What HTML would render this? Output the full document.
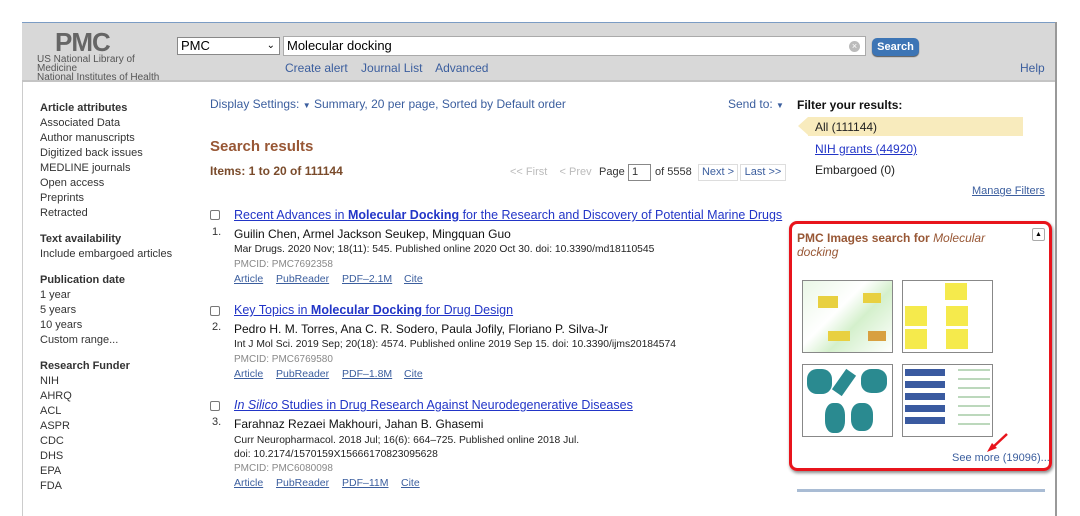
<!DOCTYPE html>
<html><head><style>
*{margin:0;padding:0;box-sizing:border-box}
body{width:1080px;height:516px;background:#fff;font-family:"Liberation Sans",Arial,sans-serif;position:relative;overflow:hidden;font-size:11px;color:#333}
.a{position:absolute;white-space:nowrap}
a,.l{color:#3b5e9e}
.u{text-decoration:underline}
#hdr{position:absolute;left:22px;top:22px;width:1034px;height:60px;background:#d8d8d8;border-top:1px solid #7b9cc4;border-bottom:2px solid #c4c4c4}
#vr{position:absolute;left:1055px;top:22px;width:2px;height:494px;background:#999}
#vl{position:absolute;left:22px;top:82px;width:1px;height:434px;background:#ccc}
.side div{font-size:11px;color:#333;line-height:15px}
.side b{color:#333}
.res .t{font-size:12.5px;color:#2235c7;text-decoration:underline}
.cb{position:absolute;width:10px;height:10px;border:1px solid #777;border-radius:2px;background:#fff}
.thumb{position:absolute;border:1px solid #888;width:91px;height:73px;background:#fff}
.det{font-size:10.3px !important}
</style></head><body>
<div id="hdr"></div>
<div id="vr"></div>
<div id="vl"></div>
<div class="a" style="left:55px;top:27px;font-size:26px;font-weight:bold;color:#666;letter-spacing:-1px;">PMC</div>
<div class="a" style="left:37px;top:55px;font-size:10px;color:#555;line-height:9px">US National Library of<br>Medicine<br>National Institutes of Health</div>
<div class="a" style="left:177px;top:37px;width:103px;height:18px;background:#fff;border:1px solid #888;font-size:13px;padding-left:3px;line-height:16px;color:#000">PMC<span style="position:absolute;right:4px;top:0;font-size:10px">&#x2304;</span></div>
<div class="a" style="left:283px;top:36px;width:583px;height:20px;background:#fff;border:1px solid #aaa;font-size:13px;padding-left:3px;line-height:18px;color:#000">Molecular docking<span style="position:absolute;right:5px;top:4px;width:11px;height:11px;border-radius:50%;background:#bbb;color:#fff;font-size:9px;line-height:11px;text-align:center">×</span></div>
<div class="a" style="left:872px;top:38px;width:47px;height:18px;background:#3d75b5;border-radius:5px;color:#fff;font-weight:bold;font-size:11px;text-align:center;line-height:18px;box-shadow:0 1px 1px #555">Search</div>
<div class="a l" style="left:285px;top:61px;font-size:12px">Create alert&nbsp;&nbsp;&nbsp; Journal List&nbsp;&nbsp;&nbsp; Advanced</div>
<div class="a l" style="left:1020px;top:61px;font-size:12px">Help</div>
<div class="a side" style="left:40px;top:101px">
<div><b>Article attributes</b></div><div>Associated Data</div><div>Author manuscripts</div><div>Digitized back issues</div><div>MEDLINE journals</div><div>Open access</div><div>Preprints</div><div>Retracted</div>
<div style="margin-top:11px"><b>Text availability</b></div><div>Include embargoed articles</div>
<div style="margin-top:11px"><b>Publication date</b></div><div>1 year</div><div>5 years</div><div>10 years</div><div>Custom range...</div>
<div style="margin-top:11px"><b>Research Funder</b></div><div>NIH</div><div>AHRQ</div><div>ACL</div><div>ASPR</div><div>CDC</div><div>DHS</div><div>EPA</div><div>FDA</div>
</div>
<div class="a l" style="left:210px;top:97px;font-size:12px">Display Settings: <span style="font-size:8px">▼</span> Summary, 20 per page, Sorted by Default order</div>
<div class="a l" style="left:728px;top:97px;font-size:12px">Send to: <span style="font-size:8px">▼</span></div>
<div class="a" style="left:210px;top:138px;font-size:15px;font-weight:bold;color:#985735">Search results</div>
<div class="a" style="left:210px;top:164px;font-size:12px;font-weight:bold;color:#7a4b2b">Items: 1 to 20 of 111144</div>
<div class="a" style="left:510px;top:166px;font-size:11px;color:#bbb">&lt;&lt; First&nbsp;&nbsp;&nbsp; &lt; Prev</div>
<div class="a" style="left:599px;top:166px;font-size:11px;color:#333">Page</div>
<div class="a" style="left:628px;top:164px;width:23px;height:17px;border:1px solid #888;font-size:11px;padding-left:3px;line-height:15px">1</div>
<div class="a" style="left:655px;top:166px;font-size:11px">of 5558</div>
<div class="a l" style="left:698px;top:164px;width:40px;height:17px;border:1px solid #ddd;font-size:11px;text-align:center;line-height:15px">Next &gt;</div>
<div class="a l" style="left:740px;top:164px;width:46px;height:17px;border:1px solid #ddd;font-size:11px;text-align:center;line-height:15px">Last &gt;&gt;</div>

<div class="res">
<div class="cb" style="left:210px;top:210px"></div>
<div class="a t" style="left:234px;top:208px">Recent Advances in <b>Molecular Docking</b> for the Research and Discovery of Potential Marine Drugs</div>
<div class="a" style="left:212px;top:226px;font-size:11px">1.</div>
<div class="a" style="left:234px;top:227px;font-size:12px;color:#111">Guilin Chen, Armel Jackson Seukep, Mingquan Guo</div>
<div class="a det" style="left:234px;top:244px;color:#222">Mar Drugs. 2020 Nov; 18(11): 545. Published online 2020 Oct 30. doi: 10.3390/md18110545</div>
<div class="a" style="left:234px;top:259px;font-size:10px;color:#888">PMCID: PMC7692358</div>
<div class="a l u" style="left:234px;top:273px;font-size:10.5px">Article</div><div class="a l u" style="left:276px;top:273px;font-size:10.5px">PubReader</div><div class="a l u" style="left:342px;top:273px;font-size:10.5px">PDF–2.1M</div><div class="a l u" style="left:404px;top:273px;font-size:10.5px">Cite</div>

<div class="cb" style="left:210px;top:306px"></div>
<div class="a t" style="left:234px;top:303px">Key Topics in <b>Molecular Docking</b> for Drug Design</div>
<div class="a" style="left:212px;top:321px;font-size:11px">2.</div>
<div class="a" style="left:234px;top:322px;font-size:12px;color:#111">Pedro H. M. Torres, Ana C. R. Sodero, Paula Jofily, Floriano P. Silva-Jr</div>
<div class="a det" style="left:234px;top:339px;color:#222">Int J Mol Sci. 2019 Sep; 20(18): 4574. Published online 2019 Sep 15. doi: 10.3390/ijms20184574</div>
<div class="a" style="left:234px;top:354px;font-size:10px;color:#888">PMCID: PMC6769580</div>
<div class="a l u" style="left:234px;top:368px;font-size:10.5px">Article</div><div class="a l u" style="left:276px;top:368px;font-size:10.5px">PubReader</div><div class="a l u" style="left:342px;top:368px;font-size:10.5px">PDF–1.8M</div><div class="a l u" style="left:404px;top:368px;font-size:10.5px">Cite</div>

<div class="cb" style="left:210px;top:401px"></div>
<div class="a t" style="left:234px;top:398px"><i>In Silico</i> Studies in Drug Research Against Neurodegenerative Diseases</div>
<div class="a" style="left:212px;top:416px;font-size:11px">3.</div>
<div class="a" style="left:234px;top:417px;font-size:12px;color:#111">Farahnaz Rezaei Makhouri, Jahan B. Ghasemi</div>
<div class="a det" style="left:234px;top:434px;color:#222;line-height:14px">Curr Neuropharmacol. 2018 Jul; 16(6): 664–725. Published online 2018 Jul.<br>doi: 10.2174/1570159X15666170823095628</div>
<div class="a" style="left:234px;top:463px;font-size:10px;color:#888">PMCID: PMC6080098</div>
<div class="a l u" style="left:234px;top:477px;font-size:10.5px">Article</div><div class="a l u" style="left:276px;top:477px;font-size:10.5px">PubReader</div><div class="a l u" style="left:342px;top:477px;font-size:10.5px">PDF–11M</div><div class="a l u" style="left:401px;top:477px;font-size:10.5px">Cite</div>
</div>

<div class="a" style="left:797px;top:98px;font-size:12px;font-weight:bold;color:#111">Filter your results:</div>
<div class="a" style="left:808px;top:117px;width:215px;height:19px;background:#f8ebbd"></div>
<div class="a" style="left:798px;top:117px;width:0;height:0;border-top:9.5px solid transparent;border-bottom:9.5px solid transparent;border-right:10px solid #f8ebbd"></div>
<div class="a" style="left:815px;top:120px;font-size:12px;color:#222">All (111144)</div>
<div class="a u" style="left:815px;top:142px;font-size:12px;color:#2235c7">NIH grants (44920)</div>
<div class="a" style="left:815px;top:163px;font-size:12px;color:#222">Embargoed (0)</div>
<div class="a l u" style="left:972px;top:185px;font-size:11px">Manage Filters</div>

<div class="a" style="left:789px;top:221px;width:263px;height:250px;border:3px solid #e8141c;border-radius:8px;box-shadow:1px 2px 3px #888"></div>
<div class="a" style="left:797px;top:231px;font-size:12px;color:#985735;line-height:14px;font-weight:bold">PMC Images search for <i style="font-weight:normal">Molecular</i><br><i style="font-weight:normal">docking</i></div>
<div class="a" style="left:1032px;top:228px;width:13px;height:13px;border:1px solid #aaa;border-radius:2px;font-size:7px;text-align:center;line-height:11px;color:#000">▲</div>
<div class="thumb" style="left:802px;top:280px;background:linear-gradient(135deg,#eaf7e6,#fff 40%,#d4f0cc 60%,#fff);"><div style="position:absolute;left:15px;top:15px;width:20px;height:12px;background:#e8d040"></div><div style="position:absolute;left:25px;top:50px;width:22px;height:10px;background:#e8d040"></div><div style="position:absolute;left:60px;top:12px;width:18px;height:10px;background:#e8d040"></div><div style="position:absolute;left:65px;top:50px;width:18px;height:10px;background:#d8a040"></div></div>
<div class="thumb" style="left:902px;top:280px"><div style="position:absolute;left:42px;top:2px;width:22px;height:17px;background:#f5ea4c"></div><div style="position:absolute;left:2px;top:25px;width:22px;height:20px;background:#f5ea4c"></div><div style="position:absolute;left:43px;top:25px;width:22px;height:20px;background:#f5ea4c"></div><div style="position:absolute;left:2px;top:48px;width:22px;height:20px;background:#f5ea4c"></div><div style="position:absolute;left:43px;top:48px;width:22px;height:20px;background:#f5ea4c"></div></div>
<div class="thumb" style="left:802px;top:364px"><div style="position:absolute;left:4px;top:4px;width:25px;height:25px;background:#2a8a90;border-radius:40%"></div><div style="position:absolute;left:35px;top:5px;width:12px;height:25px;background:#2a8a90;transform:rotate(35deg)"></div><div style="position:absolute;left:58px;top:4px;width:26px;height:24px;background:#2a8a90;border-radius:40%"></div><div style="position:absolute;left:22px;top:38px;width:20px;height:30px;background:#2a8a90;border-radius:40%"></div><div style="position:absolute;left:48px;top:38px;width:22px;height:28px;background:#2a8a90;border-radius:40%"></div></div>
<div class="thumb" style="left:902px;top:364px"><div style="position:absolute;left:2px;top:4px;width:40px;height:60px;background:repeating-linear-gradient(180deg,#3a5aa0 0 7px,#fff 7px 12px)"></div><div style="position:absolute;left:55px;top:4px;width:32px;height:60px;background:repeating-linear-gradient(180deg,#bcd8bc 0 2px,#fff 2px 9px)"></div></div>
<svg class="a" style="left:985px;top:432px" width="25" height="22"><path d="M22 2 L6 17" stroke="#e8141c" stroke-width="2.5" fill="none"/><path d="M2 20 L12 16 L7 11 Z" fill="#e8141c"/></svg>
<div class="a l" style="left:952px;top:452px;font-size:11px">See more (19096)...</div>
<div class="a" style="left:797px;top:489px;width:248px;height:3px;background:#a9bcd4"></div>
</body></html>
